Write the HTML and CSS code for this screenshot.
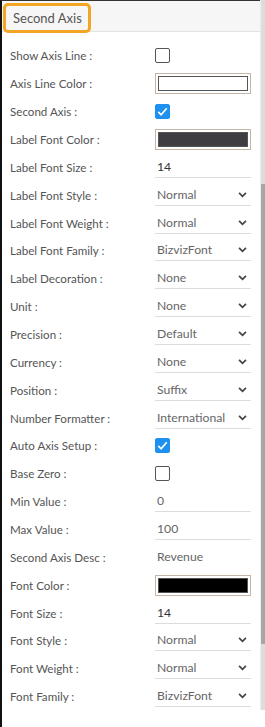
FILE: index.html
```
<!DOCTYPE html>
<html>
<head>
    <title>Second Axis</title>
    <link rel="stylesheet" href="styles.css">
</head>
<body>
    <div class="frame">
        <div class="panel">
            <div class="panel-header">
                <span class="tab-title">Second Axis</span>
            </div>
            <div class="props">
                <div class="row"><span class="label">Show Axis Line :</span><span class="check"></span></div>
                <div class="row"><span class="label">Axis Line Color :</span><span class="color"><span class="swatch white"></span></span></div>
                <div class="row"><span class="label">Second Axis :</span><span class="check on"><svg viewBox="0 0 16 16" width="15" height="15"><polyline points="3.5,8.5 6.5,11.5 12.5,4.5" fill="none" stroke="#fff" stroke-width="1.8"/></svg></span></div>
                <div class="row"><span class="label">Label Font Color :</span><span class="color"><span class="swatch grey"></span></span></div>
                <div class="row"><span class="label">Label Font Size :</span><span class="field dark">14</span></div>
                <div class="row"><span class="label">Label Font Style :</span><span class="field select">Normal<svg class="chev" viewBox="0 0 10 7" width="9" height="6"><polyline points="1,1 5,5 9,1" fill="none" stroke="#444" stroke-width="2"/></svg></span></div>
                <div class="row"><span class="label">Label Font Weight :</span><span class="field select">Normal<svg class="chev" viewBox="0 0 10 7" width="9" height="6"><polyline points="1,1 5,5 9,1" fill="none" stroke="#444" stroke-width="2"/></svg></span></div>
                <div class="row"><span class="label">Label Font Family :</span><span class="field select">BizvizFont<svg class="chev" viewBox="0 0 10 7" width="9" height="6"><polyline points="1,1 5,5 9,1" fill="none" stroke="#444" stroke-width="2"/></svg></span></div>
                <div class="row"><span class="label">Label Decoration :</span><span class="field select">None<svg class="chev" viewBox="0 0 10 7" width="9" height="6"><polyline points="1,1 5,5 9,1" fill="none" stroke="#444" stroke-width="2"/></svg></span></div>
                <div class="row"><span class="label">Unit :</span><span class="field select">None<svg class="chev" viewBox="0 0 10 7" width="9" height="6"><polyline points="1,1 5,5 9,1" fill="none" stroke="#444" stroke-width="2"/></svg></span></div>
                <div class="row"><span class="label">Precision :</span><span class="field select">Default<svg class="chev" viewBox="0 0 10 7" width="9" height="6"><polyline points="1,1 5,5 9,1" fill="none" stroke="#444" stroke-width="2"/></svg></span></div>
                <div class="row"><span class="label">Currency :</span><span class="field select">None<svg class="chev" viewBox="0 0 10 7" width="9" height="6"><polyline points="1,1 5,5 9,1" fill="none" stroke="#444" stroke-width="2"/></svg></span></div>
                <div class="row"><span class="label">Position :</span><span class="field select">Suffix<svg class="chev" viewBox="0 0 10 7" width="9" height="6"><polyline points="1,1 5,5 9,1" fill="none" stroke="#444" stroke-width="2"/></svg></span></div>
                <div class="row"><span class="label">Number Formatter :</span><span class="field select">International<svg class="chev" viewBox="0 0 10 7" width="9" height="6"><polyline points="1,1 5,5 9,1" fill="none" stroke="#444" stroke-width="2"/></svg></span></div>
                <div class="row"><span class="label">Auto Axis Setup :</span><span class="check on"><svg viewBox="0 0 16 16" width="15" height="15"><polyline points="3.5,8.5 6.5,11.5 12.5,4.5" fill="none" stroke="#fff" stroke-width="1.8"/></svg></span></div>
                <div class="row"><span class="label">Base Zero :</span><span class="check"></span></div>
                <div class="row"><span class="label">Min Value :</span><span class="field">0</span></div>
                <div class="row"><span class="label">Max Value :</span><span class="field">100</span></div>
                <div class="row"><span class="label">Second Axis Desc :</span><span class="field plain">Revenue</span></div>
                <div class="row"><span class="label">Font Color :</span><span class="color"><span class="swatch black"></span></span></div>
                <div class="row"><span class="label">Font Size :</span><span class="field dark">14</span></div>
                <div class="row"><span class="label">Font Style :</span><span class="field select">Normal<svg class="chev" viewBox="0 0 10 7" width="9" height="6"><polyline points="1,1 5,5 9,1" fill="none" stroke="#444" stroke-width="2"/></svg></span></div>
                <div class="row"><span class="label">Font Weight :</span><span class="field select">Normal<svg class="chev" viewBox="0 0 10 7" width="9" height="6"><polyline points="1,1 5,5 9,1" fill="none" stroke="#444" stroke-width="2"/></svg></span></div>
                <div class="row"><span class="label">Font Family :</span><span class="field select">BizvizFont<svg class="chev" viewBox="0 0 10 7" width="9" height="6"><polyline points="1,1 5,5 9,1" fill="none" stroke="#444" stroke-width="2"/></svg></span></div>
            </div>
        </div>
        <div class="scrollbar">
            <div class="thumb"></div>
        </div>
    </div>
</body>
</html>
```

FILE: styles.css
```
body {
    margin: 0;
    font-family: 'Lato', 'Open Sans', sans-serif;
    background-color: #fff;
}

.frame {
    display: flex;
    height: 727px;
    border-left: 2px solid #111;
    border-top: 1px solid #333;
    box-sizing: border-box;
}

.panel {
    flex: 1;
}

.panel-header {
    height: 31px;
    background-color: #f6f6f6;
    border-bottom: 1px solid #e2e2e2;
    box-sizing: border-box;
    padding: 2px 0 0 1px;
}

.tab-title {
    display: inline-block;
    height: 30px;
    line-height: 25px;
    padding: 0 6px 0 7px;
    border: 3px solid #f2a624;
    border-radius: 5px;
    box-sizing: border-box;
    color: #555;
    font-size: 13px;
}

.props {
    padding-top: 10px;
}

.row {
    display: flex;
    align-items: center;
    height: 27.87px;
    padding-left: 8px;
}

.label {
    width: 145px;
    flex-shrink: 0;
    font-size: 11.6px;
    color: #555;
}

.check {
    width: 15px;
    height: 15px;
    border: 1.5px solid #555;
    border-radius: 2px;
    box-sizing: border-box;
}

.check.on {
    background-color: #1e90f0;
    border-color: #1e90f0;
    display: flex;
    align-items: center;
    justify-content: center;
}

.check.on svg {
    flex-shrink: 0;
}

.color {
    width: 96px;
    height: 21px;
    border: 1px solid #c4b5a6;
    padding: 2px;
    box-sizing: border-box;
    display: flex;
}

.swatch {
    flex: 1;
    border: 1px solid #555;
}

.swatch.white { background-color: #fff; }
.swatch.grey { background-color: #3e3e42; }
.swatch.black { background-color: #000; }

.field {
    width: 96px;
    height: 21px;
    line-height: 20px;
    border-bottom: 1px solid #dcdcdc;
    box-sizing: border-box;
    padding-left: 2px;
    font-size: 12.2px;
    color: #666;
    display: flex;
    align-items: center;
    justify-content: space-between;
}

.field.dark {
    color: #333;
}

.field.plain {
    border-bottom: none;
}

.chev {
    margin-right: 4px;
    flex-shrink: 0;
}

.scrollbar {
    width: 4px;
    height: 710px;
    margin-top: -1px;
    background-color: #ddd;
    border-left: 1px solid #eee;
}

.thumb {
    margin-top: 184px;
    height: 460px;
    background-color: #a6a6a6;
}
```
